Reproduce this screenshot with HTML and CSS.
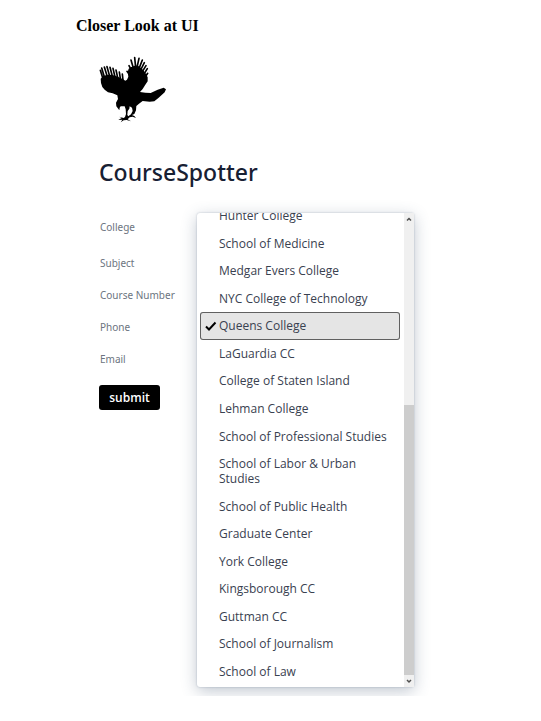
FILE: index.html
```html
<!DOCTYPE html>
<html lang="en">
<head>
<meta charset="utf-8">
<title>CourseSpotter</title>
<link rel="stylesheet" href="styles.css">
</head>
<body>
<h1 class="caption">Closer Look at UI</h1>
<main class="app">
  <svg class="logo" viewBox="27 18 204 201" role="img" aria-label="Hawk">
    <path d="M88 181L79 169L78 158L84 147L82 136L68 130L54 127L44 119L37 111L33 99L32 86L40 78L50 75L60 74L70 76L80 79L90 83L99 88L106 92L111 89L115 80L113 66L116 56L124 51L134 47L144 47L152 53L160 61L168 72L173 82L173 94L165 106L158 117L150 126L166 128L182 129L203 119L221 113L228 118L224 127L206 143L193 154L179 155L158 153L147 161L139 168L138 181L133 192L126 195L133 198L138 204L128 200L119 202L113 208L123 214L110 210L101 211L92 217L97 209L85 210L95 204L87 200L101 204L105 201L108 192L107 178L104 169L92 169L89 173ZM119 169L118 176L113 183L112 195L115 199L123 193L128 183L126 173Z"/>
    <path class="feathers" d="M31 61L39 86M35 54L44 84M43 51L52 80M51 50L59 79M60 52L67 79M69 55L75 81M78 60L83 83M88 66L91 86M97 72L99 91M111 64L120 76M117 47L125 62M123 30L130 54M134 23L137 52M147 25L141 52M157 30L147 56M163 38L152 60M168 47L157 65M172 56L162 72M173 70L166 80"/>
  </svg>
  <h2 class="brand">CourseSpotter</h2>
  <form class="form">
    <div class="field first"><label for="college">College</label><input id="college" type="text" readonly></div>
    <div class="field"><label for="subject">Subject</label><input id="subject" type="text"></div>
    <div class="field"><label for="course">Course Number</label><input id="course" type="text"></div>
    <div class="field"><label for="phone">Phone</label><input id="phone" type="tel"></div>
    <div class="field"><label for="email">Email</label><input id="email" type="email"></div>
    <button class="submit" type="button">submit</button>
    <div class="menu">
      <div class="viewport">
        <div class="options" role="radiogroup" aria-label="College">
          <label class="option"><input type="radio" name="c"><span>Hunter College</span></label>
          <label class="option"><input type="radio" name="c"><span>School of Medicine</span></label>
          <label class="option"><input type="radio" name="c"><span>Medgar Evers College</span></label>
          <label class="option"><input type="radio" name="c"><span>NYC College of Technology</span></label>
          <label class="option selected"><input type="radio" name="c" checked><svg class="check" viewBox="0 0 12 10" aria-hidden="true"><path d="M1 5.5L4 8.5L10.5 1.5"/></svg><span>Queens College</span></label>
          <label class="option"><input type="radio" name="c"><span>LaGuardia CC</span></label>
          <label class="option"><input type="radio" name="c"><span>College of Staten Island</span></label>
          <label class="option"><input type="radio" name="c"><span>Lehman College</span></label>
          <label class="option"><input type="radio" name="c"><span>School of Professional Studies</span></label>
          <label class="option"><input type="radio" name="c"><span>School of Labor &amp; Urban Studies</span></label>
          <label class="option"><input type="radio" name="c"><span>School of Public Health</span></label>
          <label class="option"><input type="radio" name="c"><span>Graduate Center</span></label>
          <label class="option"><input type="radio" name="c"><span>York College</span></label>
          <label class="option"><input type="radio" name="c"><span>Kingsborough CC</span></label>
          <label class="option"><input type="radio" name="c"><span>Guttman CC</span></label>
          <label class="option"><input type="radio" name="c"><span>School of Journalism</span></label>
          <label class="option"><input type="radio" name="c"><span>School of Law</span></label>
        </div>
      </div>
      <div class="scrollbar" aria-hidden="true">
        <svg class="arrow" viewBox="0 0 10 10"><path d="M3 6.500L5 4.500L7 6.500"/></svg>
        <div class="track"><div class="thumb"></div></div>
        <svg class="arrow" viewBox="0 0 10 10"><path d="M3 4L5 6L7 4"/></svg>
      </div>
    </div>
  </form>
</main>
</body>
</html>
```
FILE: styles.css
```css
* { box-sizing: border-box; }
body {
  margin: 0;
  padding: 16px 76px 0;
  background: #fff;
  color: #394150;
  font-family: "Segoe UI", "Open Sans", sans-serif;
}
.caption {
  margin: 0;
  font: bold 16px/20px "Liberation Serif", serif;
  color: #000;
}
.app {
  padding: 20px 0 9px 23px;
  overflow: hidden;
}
.logo {
  display: block;
  width: 68px;
  height: 67px;
  fill: #000;
}
.feathers {
  fill: none;
  stroke: #000;
  stroke-width: 5;
  stroke-linecap: round;
}
.brand {
  margin: 33px 0 25px;
  font-family: "Segoe UI", "Noto Sans", sans-serif;
  font-size: 23px;
  line-height: 32px;
  font-weight: 500;
  color: #172033;
}
.form {
  position: relative;
  min-height: 474px;
  padding-right: 51px;
}
.field {
  display: flex;
  align-items: center;
  height: 32px;
  padding-left: 1px;
}
.field.first {
  height: 28px;
  margin-bottom: 6px;
}
.field label {
  flex: 0 0 108px;
  font-family: "Segoe UI", "Noto Sans", sans-serif;
  font-size: 10px;
  line-height: 16px;
  color: #6c7480;
}
.field input {
  flex: 1;
  min-width: 0;
  height: 22px;
  border: 0;
  background: transparent;
}
.submit {
  display: block;
  width: 61px;
  height: 25px;
  margin-top: 10px;
  padding: 0;
  border: 0;
  border-radius: 3px;
  background: #000;
  color: #fff;
  font: 600 12px/24px "Segoe UI", "Open Sans", sans-serif;
}
.menu {
  position: absolute;
  top: 0;
  left: 98px;
  right: 51px;
  display: flex;
  height: 474px;
  border-radius: 3px;
  background: #fff;
  box-shadow: 0 0 2px rgba(60, 80, 110, .35), 0 4px 16px rgba(60, 80, 110, .32);
}
.viewport {
  flex: 1;
  display: flex;
  flex-direction: column;
  justify-content: flex-end;
  padding: 0 4px 2px 3px;
  overflow: hidden;
}
.options {
  flex: none;
  display: flex;
  flex-direction: column;
  height: 483px;
}
.option {
  position: relative;
  flex: 1 0 auto;
  display: flex;
  align-items: center;
  padding: 5px 8px 5px 19px;
  font-size: 12px;
  line-height: 15px;
}
.option input {
  position: absolute;
  inset: 0;
  margin: 0;
  appearance: none;
}
.selected {
  border-radius: 3px;
  background: #e5e5e5;
  box-shadow: inset 0 0 0 1px #606060;
}
.check {
  position: absolute;
  left: 5px;
  width: 12px;
  height: 10px;
  fill: none;
  stroke: #000;
  stroke-width: 2;
}
.scrollbar {
  display: flex;
  flex-direction: column;
  width: 10px;
  background: #f0f0f0;
}
.arrow {
  width: 10px;
  height: 12px;
  fill: none;
  stroke: #505050;
  stroke-width: 1.5;
}
.track {
  flex: 1;
  display: flex;
  flex-direction: column;
  justify-content: flex-end;
}
.thumb {
  height: 60%;
  background: #cdcdcd;
}
```
